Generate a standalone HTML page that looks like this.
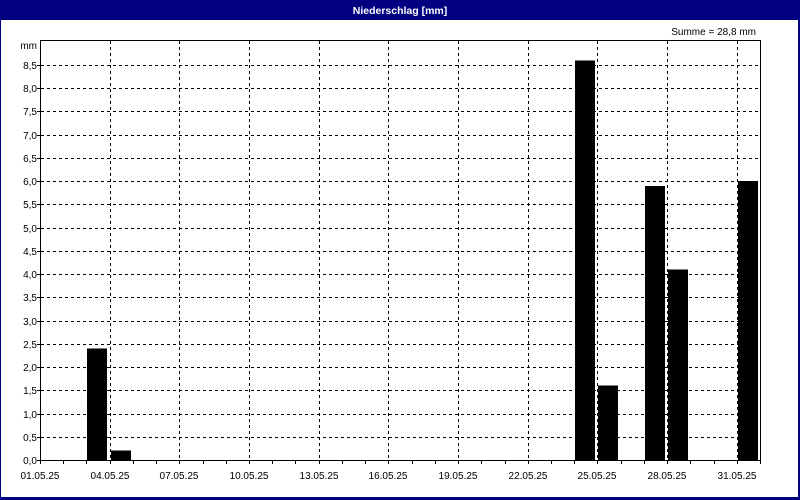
<!DOCTYPE html>
<html><head><style>
html,body{margin:0;padding:0;background:#fff;}
svg{display:block;font-family:"Liberation Sans",Tahoma,sans-serif;}
</style></head><body>
<svg width="800" height="500" xmlns="http://www.w3.org/2000/svg">
<rect x="0" y="0" width="800" height="500" fill="#000080"/>
<rect x="1" y="20" width="797" height="477" fill="#fff"/>
<text x="400" y="14" fill="#fff" font-size="10.5" font-weight="bold" text-anchor="middle">Niederschlag [mm]</text>
<text x="756" y="35" fill="#000" font-size="10" text-anchor="end">Summe = 28,8 mm</text>
<text x="37" y="49" font-size="10" text-anchor="end">mm</text>
<g id="grid" stroke="#000" stroke-width="1" stroke-dasharray="3,3" shape-rendering="crispEdges"></g>
<g id="bars" fill="#000" shape-rendering="crispEdges"></g>
<g id="ax" stroke="#000" stroke-width="1" shape-rendering="crispEdges">
<line x1="40.5" y1="40" x2="40.5" y2="461"/>
<line x1="40" y1="460.5" x2="760" y2="460.5"/>
<line x1="760.5" y1="40" x2="760.5" y2="461"/>
<line x1="40" y1="40.5" x2="761" y2="40.5"/>
</g>
<g id="lab" font-size="10" fill="#000"></g>
</svg>
<script>
var ns="http://www.w3.org/2000/svg",g=document.getElementById('grid'),b=document.getElementById('bars'),ax=document.getElementById('ax'),lab=document.getElementById('lab');
function el(p,t,a,txt){var e=document.createElementNS(ns,t);for(var k in a)e.setAttribute(k,a[k]);if(txt)e.textContent=txt;p.appendChild(e);}
var D=720/31;
for(var i=0;i<=17;i++){var v=i*0.5,y=Math.round(460-v*46.47);
 if(i>0)el(g,'line',{x1:41,y1:y+0.5,x2:760,y2:y+0.5});
 el(ax,'line',{x1:37,y1:y+0.5,x2:40,y2:y+0.5});
 el(lab,'text',{x:37,y:y+4,'text-anchor':'end'},v.toFixed(1).replace('.',','));}
for(var d=0;d<=31;d++){var x=Math.round(40+d*D);
 el(ax,'line',{x1:x+0.5,y1:461,x2:x+0.5,y2:464});
 if(d%3==0){ if(d>0&&d<31)el(g,'line',{x1:x+0.5,y1:41,x2:x+0.5,y2:460});
  var dd=d+1;el(lab,'text',{x:x,y:479,'text-anchor':'middle'},(dd<10?'0':'')+dd+'.05.25');}}
var data={2:2.4,3:0.2,23:8.6,24:1.6,26:5.9,27:4.1,30:6.0};
for(var k in data){var x=Math.round(40+(+k+1)*D-23.23)+1; x=Math.round(40+(+k)*D)+1;var h=data[k]*46.47;
 el(b,'rect',{x:x,y:460-h,width:20,height:h});}
</script>
</body></html>
